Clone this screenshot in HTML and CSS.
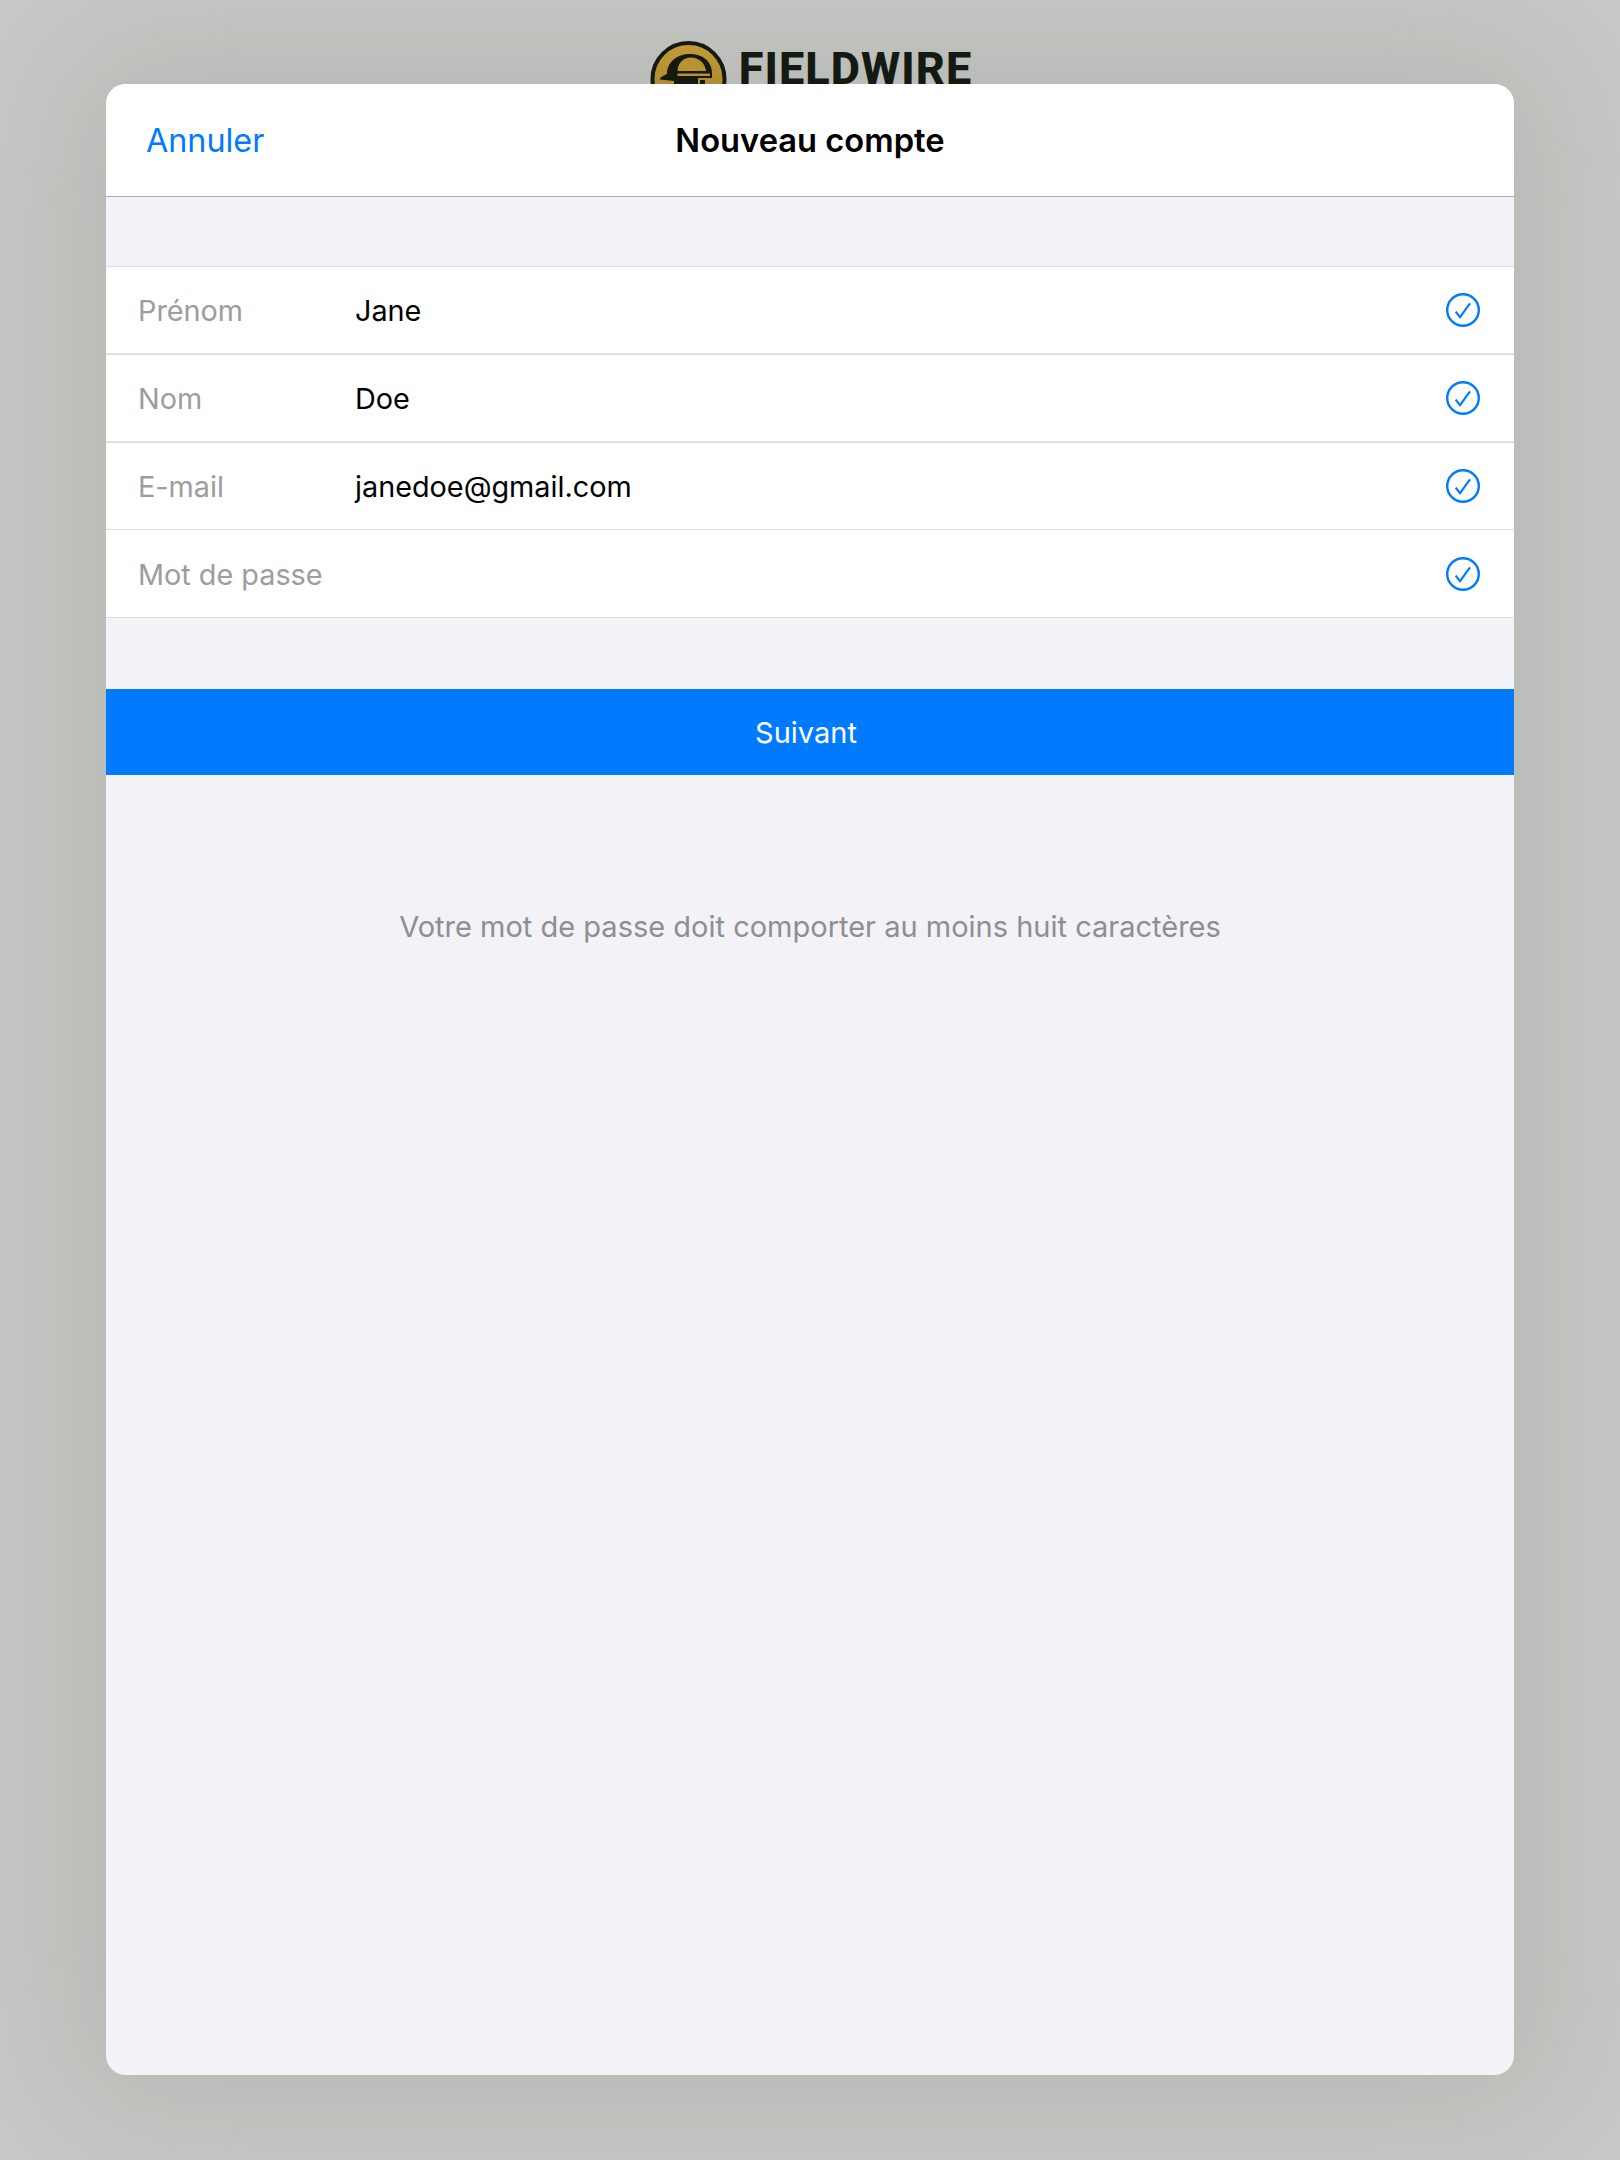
FILE: index.html
```html
<!DOCTYPE html>
<html lang="fr">
<head>
<meta charset="utf-8">
<title>Nouveau compte</title>
<link rel="stylesheet" href="styles.css">
</head>
<body>
<div class="shade"></div>
<div class="brand">
  <svg class="brand-mark" width="78" height="78" viewBox="0 0 78 78">
    <defs><linearGradient id="g" x1="0" y1="0" x2="0" y2="1"><stop offset="0" stop-color="#c39c36"/><stop offset="0.6" stop-color="#b08a2e"/></linearGradient></defs>
    <circle cx="38.500" cy="39" r="36" fill="url(#g)" stroke="#141912" stroke-width="4"/>
    <path d="M17 34C17 22 27 14 40 14C52 14 62 21 62 33V38H48V46H24V41L10 39.500C10 37 14 35.500 17 34Z" fill="#141912"/>
    <path d="M27.500 31C28 23 33 17.500 41 17.500C49 17.500 55 23 56 31ZM27.500 33.500H60V36H27.500Z" fill="#b8922f"/>
    <path d="M50 40H55V46H50Z" fill="#141912"/>
  </svg>
  <span class="brand-name">FIELDWIRE</span>
</div>
<main class="modal">
  <header class="modal-bar">
    <a class="cancel">Annuler</a>
    <h1 class="modal-title">Nouveau compte</h1>
  </header>
  <section class="fields">
    <div class="row row-thick"><span class="label">Prénom</span><span class="value">Jane</span>
      <svg class="check" width="34" height="34" viewBox="0 0 34 34"><circle cx="17" cy="17" r="15.800"/><path d="M9.700 18.700L14 24.200L24 10.300"/></svg></div>
    <div class="row row-thick"><span class="label">Nom</span><span class="value">Doe</span>
      <svg class="check" width="34" height="34" viewBox="0 0 34 34"><circle cx="17" cy="17" r="15.800"/><path d="M9.700 18.700L14 24.200L24 10.300"/></svg></div>
    <div class="row row-short"><span class="label">E-mail</span><span class="value">janedoe@gmail.com</span>
      <svg class="check" width="34" height="34" viewBox="0 0 34 34"><circle cx="17" cy="17" r="15.800"/><path d="M9.700 18.700L14 24.200L24 10.300"/></svg></div>
    <div class="row row-last"><span class="label">Mot de passe</span><span class="value"></span>
      <svg class="check" width="34" height="34" viewBox="0 0 34 34"><circle cx="17" cy="17" r="15.800"/><path d="M9.700 18.700L14 24.200L24 10.300"/></svg></div>
  </section>
  <button class="next">Suivant</button>
  <p class="hint">Votre mot de passe doit comporter au moins huit caractères</p>
</main>
</body>
</html>
```
FILE: styles.css
```css
* { box-sizing: border-box; }
html, body { margin: 0; height: 2160px; }
body {
  width: 1620px;
  overflow: hidden;
  background: #cacac8;
  font-family: Inter, "Liberation Sans", sans-serif;
  padding-top: 40px;
  position: relative;
}
.shade {
  position: absolute;
  left: 106px;
  top: 84px;
  width: 1408px;
  height: 1991px;
  border-radius: 20px;
  box-shadow: 0 0 140px 50px #b5b9b3;
}
.brand {
  position: relative;
  display: flex;
  align-items: flex-start;
  justify-content: center;
  gap: 11px;
  height: 44px;
  padding-left: 2px;
  overflow: hidden;
}
.brand-mark { flex: none; }
.brand-name {
  font-family: Roboto, sans-serif;
  font-weight: 800;
  font-size: 45px;
  line-height: 58px;
  letter-spacing: 1.100px;
  color: #141912;
}
.modal {
  width: 1408px;
  height: 1991px;
  margin: 0 0 0 106px;
  background: #f2f2f7;
  border-radius: 20px;
  overflow: hidden;
  display: flex;
  flex-direction: column;
  position: relative;
}
.modal-bar {
  height: 113px;
  background: #fff;
  border-bottom: 1px solid #a9a9ae;
  display: flex;
  align-items: center;
  justify-content: center;
  position: relative;
}
.cancel {
  position: absolute;
  left: 40px;
  top: 37px;
  font-size: 32.300px;
  line-height: 40px;
  color: #007aff;
}
.modal-title {
  margin: 0;
  font-size: 32.700px;
  line-height: 40px;
  font-weight: 600;
  color: #000;
}
.fields {
  margin-top: 69px;
  background: #fff;
  border-top: 1px solid #dcdde2;
}
.row {
  height: 88px;
  display: flex;
  align-items: center;
  padding: 0 34px 0 32px;
  border-bottom: 1px solid #dcdce0;
  font-size: 28.800px;
}
.row-thick { border-bottom: 2px solid #dcdee2; }
.row-short { height: 87px; }
.row-last { padding-top: 1px; }
.label { width: 217px; color: #9c9ca1; }
.value { flex: 1; color: #000; }
.check { flex: none; }
.check circle, .check path { fill: none; stroke: #007aff; stroke-width: 2.400; }
.check path { stroke-width: 2.100; }
.next {
  display: block;
  width: 100%;
  height: 86px;
  margin-top: 71px;
  border: 0;
  padding: 0 8px 0 0;
  background: #007aff;
  color: #fff;
  font: 400 29px Inter, "Liberation Sans", sans-serif;
  text-align: center;
}
.hint {
  margin: 132px 0 0;
  text-align: center;
  font-size: 29px;
  line-height: 40px;
  color: #8e8e93;
}
```
